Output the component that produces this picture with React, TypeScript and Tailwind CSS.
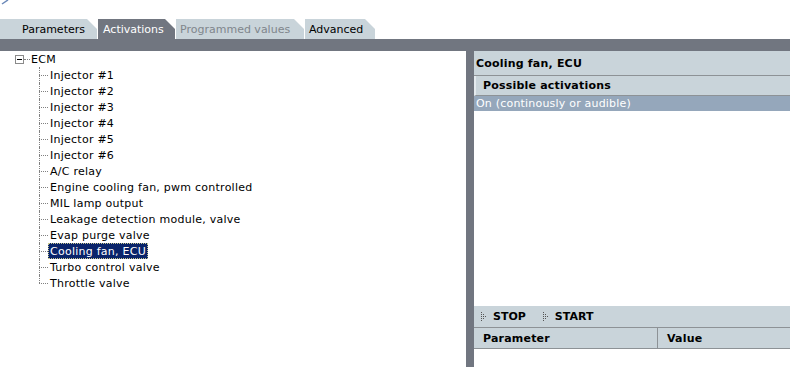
import React from 'react';

const items = [
  'Injector #1',
  'Injector #2',
  'Injector #3',
  'Injector #4',
  'Injector #5',
  'Injector #6',
  'A/C relay',
  'Engine cooling fan, pwm controlled',
  'MIL lamp output',
  'Leakage detection module, valve',
  'Evap purge valve',
  'Cooling fan, ECU',
  'Turbo control valve',
  'Throttle valve',
];

const tabs = [
  { label: 'Parameters', w: 'w-[97px]', pl: 'pl-[22px]', style: 'bg-[#c9d4da] text-black' },
  { label: 'Activations', w: 'w-[77px]', pl: 'pl-[5px]', style: 'bg-[#717680] text-white' },
  { label: 'Programmed values', w: 'w-[128px]', pl: 'pl-[4px]', style: 'bg-[#c9d4da] text-[#80868c]' },
  { label: 'Advanced', w: 'w-[70px]', pl: 'pl-[4px]', style: 'bg-[#c9d4da] text-black' },
];

function Arrow() {
  return (
    <svg width="7" height="9" viewBox="0 0 7 9" className="mr-[5px]">
      <g fill="#555">
        <rect x="0" y="0" width="1" height="1" />
        <rect x="0" y="2" width="1" height="1" />
        <rect x="0" y="4" width="1" height="1" />
        <rect x="0" y="6" width="1" height="1" />
        <rect x="0" y="8" width="1" height="1" />
        <rect x="2" y="2" width="1" height="1" />
        <rect x="2" y="6" width="1" height="1" />
        <rect x="2" y="4" width="1" height="1" />
        <rect x="4" y="4" width="1" height="1" />
      </g>
    </svg>
  );
}

export default function App() {
  return (
    <div className="w-[790px] h-[367px] bg-white overflow-hidden flex flex-col font-['DejaVu_Sans','Liberation_Sans',sans-serif] text-[11px] leading-none">
      {/* top strip */}
      <div className="h-[19px] relative">
        <svg width="10" height="5" viewBox="0 0 10 5" className="absolute left-0 top-0">
          <path d="M2 4 L8 0" stroke="#6a88b8" strokeWidth="1.5" />
        </svg>
      </div>

      {/* tabs */}
      <div className="h-[20px] flex gap-px">
        {tabs.map((t) => (
          <div
            key={t.label}
            className={`${t.w} ${t.pl} ${t.style} h-full flex items-center pt-px [clip-path:polygon(0_0,calc(100%-10px)_0,100%_10px,100%_100%,0_100%)]`}
          >
            {t.label}
          </div>
        ))}
      </div>
      <div className="h-[12px] bg-[#717680]" />

      <div className="flex flex-1 min-h-0">
        {/* tree */}
        <div className="w-[466px] flex flex-col tracking-[0.25px]">
          <div className="h-[16px] flex items-center">
            <div className="ml-[15px] w-[9px] h-[9px] border border-[#8a8a8a] flex items-center justify-center">
              <div className="w-[5px] h-px bg-black" />
            </div>
            <div className="w-[6px] border-t border-dotted border-[#808080]" />
            <span className="ml-[1px] text-black">ECM</span>
          </div>
          {items.map((it, i) => {
            const last = i === items.length - 1;
            const sel = it === 'Cooling fan, ECU';
            return (
              <div key={it} className="h-[16px] flex items-stretch">
                <div className="ml-[39px] w-[9px] flex flex-col">
                  <div className="h-[8px] border-l border-dotted border-[#808080]" />
                  <div className={`flex-1 border-t border-dotted border-[#808080] ${last ? '' : 'border-l'}`} />
                </div>
                <div className="flex items-center">
                  <span
                    className={
                      sel
                        ? 'bg-[#0a246a] text-white px-[2px] h-[16px] flex items-center outline-1 outline-dotted outline-[#c8c890] -outline-offset-1'
                        : 'ml-[2px] text-black'
                    }
                  >
                    {it}
                  </span>
                </div>
              </div>
            );
          })}
        </div>

        {/* right panel */}
        <div className="flex-1 flex">
          <div className="w-[8px] bg-[#717680]" />
          <div className="flex-1 flex flex-col">
            <div className="h-[25px] bg-[#c9d4da] border-b border-[#8d9296] flex items-center pl-[2px] font-bold text-black tracking-[0.2px]">
              Cooling fan, ECU
            </div>
            <div className="h-[20px] bg-[#c9d4da] border-l-2 border-[#e4eaee] border-b border-b-[#8d9296] flex items-center pl-[7px] font-bold text-black tracking-[0.2px]">
              Possible activations
            </div>
            <div className="h-[15px] bg-[#95a7bb] text-white flex items-center pl-[2px] tracking-[0.2px]">
              On (continously or audible)
            </div>
            <div className="flex-1" />
            <div className="h-[22px] bg-[#c9d4da] border-b border-[#8d9296] flex items-center pl-[7px] font-bold text-black">
              <Arrow />
              <span>STOP</span>
              <span className="ml-[17px]" />
              <Arrow />
              <span>START</span>
            </div>
            <div className="h-[21px] bg-[#c9d4da] border-b border-[#8d9296] flex font-bold text-black tracking-[0.2px]">
              <div className="w-[184px] border-r border-[#8d9296] flex items-center pl-[9px]">Parameter</div>
              <div className="flex-1 flex items-center pl-[9px]">Value</div>
            </div>
            <div className="h-[18px]" />
          </div>
        </div>
      </div>
    </div>
  );
}
